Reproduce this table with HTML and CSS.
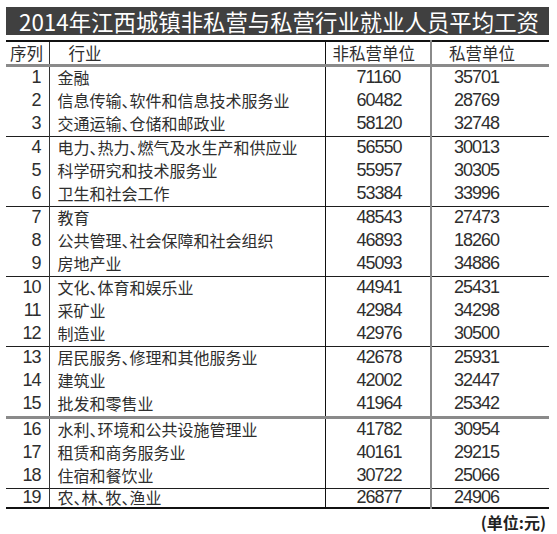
FILE: index.html
```html
<!DOCTYPE html>
<html lang="zh-CN">
<head>
    <meta charset="UTF-8">
    <title>2014年江西城镇非私营与私营行业就业人员平均工资</title>
    <link rel="stylesheet" href="styles.css">
</head>
<body>
    <div class="chart">
        <div class="title">2014年江西城镇非私营与私营行业就业人员平均工资</div>
        <table class="wage-table">
            <colgroup>
                <col class="c-no">
                <col class="c-name">
                <col class="c-pub">
                <col class="c-pri">
            </colgroup>
            <thead>
                <tr>
                    <th class="no">序列</th>
                    <th class="name">行业</th>
                    <th class="pub">非私营单位</th>
                    <th class="pri">私营单位</th>
                </tr>
            </thead>
            <tbody>
                <tr><td class="no">1</td><td class="name">金融</td><td class="pub">71160</td><td class="pri">35701</td></tr>
                <tr><td class="no">2</td><td class="name">信息传输<span class="dun">、</span>软件和信息技术服务业</td><td class="pub">60482</td><td class="pri">28769</td></tr>
                <tr><td class="no">3</td><td class="name">交通运输<span class="dun">、</span>仓储和邮政业</td><td class="pub">58120</td><td class="pri">32748</td></tr>
            </tbody>
            <tbody>
                <tr><td class="no">4</td><td class="name">电力<span class="dun">、</span>热力<span class="dun">、</span>燃气及水生产和供应业</td><td class="pub">56550</td><td class="pri">30013</td></tr>
                <tr><td class="no">5</td><td class="name">科学研究和技术服务业</td><td class="pub">55957</td><td class="pri">30305</td></tr>
                <tr><td class="no">6</td><td class="name">卫生和社会工作</td><td class="pub">53384</td><td class="pri">33996</td></tr>
            </tbody>
            <tbody>
                <tr><td class="no">7</td><td class="name">教育</td><td class="pub">48543</td><td class="pri">27473</td></tr>
                <tr><td class="no">8</td><td class="name">公共管理<span class="dun">、</span>社会保障和社会组织</td><td class="pub">46893</td><td class="pri">18260</td></tr>
                <tr><td class="no">9</td><td class="name">房地产业</td><td class="pub">45093</td><td class="pri">34886</td></tr>
            </tbody>
            <tbody>
                <tr><td class="no">10</td><td class="name">文化<span class="dun">、</span>体育和娱乐业</td><td class="pub">44941</td><td class="pri">25431</td></tr>
                <tr><td class="no">11</td><td class="name">采矿业</td><td class="pub">42984</td><td class="pri">34298</td></tr>
                <tr><td class="no">12</td><td class="name">制造业</td><td class="pub">42976</td><td class="pri">30500</td></tr>
            </tbody>
            <tbody>
                <tr><td class="no">13</td><td class="name">居民服务<span class="dun">、</span>修理和其他服务业</td><td class="pub">42678</td><td class="pri">25931</td></tr>
                <tr><td class="no">14</td><td class="name">建筑业</td><td class="pub">42002</td><td class="pri">32447</td></tr>
                <tr><td class="no">15</td><td class="name">批发和零售业</td><td class="pub">41964</td><td class="pri">25342</td></tr>
            </tbody>
            <tbody class="gray-top">
                <tr><td class="no">16</td><td class="name">水利<span class="dun">、</span>环境和公共设施管理业</td><td class="pub">41782</td><td class="pri">30954</td></tr>
                <tr><td class="no">17</td><td class="name">租赁和商务服务业</td><td class="pub">40161</td><td class="pri">29215</td></tr>
                <tr><td class="no">18</td><td class="name">住宿和餐饮业</td><td class="pub">30722</td><td class="pri">25066</td></tr>
            </tbody>
            <tbody class="last">
                <tr><td class="no">19</td><td class="name">农<span class="dun">、</span>林<span class="dun">、</span>牧<span class="dun">、</span>渔业</td><td class="pub">26877</td><td class="pri">24906</td></tr>
            </tbody>
        </table>
        <div class="unit">(单位:元)</div>
    </div>
</body>
</html>
```

FILE: styles.css
```css
body {
    margin: 0;
    background: #fff;
    color: #2e2e2e;
    font-family: "Noto Sans CJK SC", "Liberation Sans", sans-serif;
}
.chart {
    width: 543px;
    padding: 7px 0 0 6px;
}
.title {
    height: 28px;
    line-height: 28px;
    padding-left: 13px;
    background: #404040;
    color: #fff;
    font-size: 22.4px;
    white-space: nowrap;
}
.wage-table {
    width: 543px;
    margin-top: 5px;
    border-collapse: collapse;
    table-layout: fixed;
}
.c-no { width: 43px; }
.c-name { width: 276px; }
.c-pub { width: 106px; }
.c-pri { width: 118px; }

.wage-table thead tr {
    border-top: 2px solid #111;
    border-bottom: 3px solid #8a8a8a;
}
.wage-table th {
    height: 21px;
    padding: 0 0 1px;
    font-weight: normal;
    font-size: 16.5px;
    line-height: 20px;
    text-align: left;
    white-space: nowrap;
}
.wage-table th.no { padding-left: 4px; }
.wage-table th.name { padding-left: 19px; }
.wage-table th.pub { padding-left: 7px; }
.wage-table th.pri { padding-left: 17px; }

.wage-table td {
    height: 20px;
    padding: 0 0 3px;
    line-height: 20px;
    white-space: nowrap;
    vertical-align: middle;
}
.wage-table tbody + tbody {
    border-top: 1px solid #1e1e1e;
}
.wage-table tbody.gray-top {
    border-top: 3px solid #8a8a8a;
}
.wage-table tbody.last td {
    height: 16px;
    line-height: 16px;
    padding-bottom: 2px;
}
.wage-table tbody.last {
    border-bottom: 2px solid #111;
}

.no {
    border-right: 1px solid #333;
}
.name {
    border-right: 1px solid #111;
}
.pub {
    border-right: 2px solid #8a8a8a;
}
td.no, td.pub, td.pri {
    font-family: "Liberation Sans", sans-serif;
    font-size: 18px;
    letter-spacing: -1px;
}
td.no {
    text-align: right;
    padding-right: 8px;
}
td.name {
    padding-left: 8px;
    font-size: 16px;
}
/* 顿号只占半格 */
.dun {
    letter-spacing: -8px;
}
td.pub {
    padding-left: 31px;
}
td.pri {
    padding-left: 22px;
}
.unit {
    margin-top: 3px;
    padding-right: 3px;
    line-height: 20px;
    text-align: right;
    font-weight: bold;
    font-size: 16px;
    color: #222;
}
```
